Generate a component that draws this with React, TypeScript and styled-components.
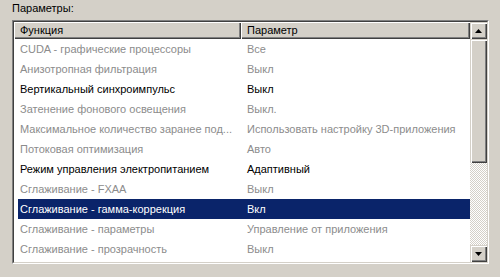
import React from "react";
import styled, { createGlobalStyle } from "styled-components";

const Global = createGlobalStyle`
  html, body { margin: 0; padding: 0; background: #d4d0c8; }
  body { font-family: "Liberation Sans", Arial, sans-serif; font-size: 11px; }
`;

const Page = styled.div`
  width: 500px;
  height: 277px;
  background: #d4d0c8;
  padding: 0 0 0 12px;
  box-sizing: border-box;
`;

const Label = styled.div`
  height: 20px;
  line-height: 16px;
  color: #000;
`;

const Panel = styled.div`
  width: 477px;
  height: 244px;
  box-sizing: border-box;
  border-style: solid;
  border-width: 1px;
  border-color: #808080 #fff #fff #808080;
  display: flex;
`;

const Inner = styled.div`
  flex: 1;
  display: flex;
  border-style: solid;
  border-width: 1px;
  border-color: #404040 #d4d0c8 #d4d0c8 #404040;
  background: #fff;
`;

const List = styled.div`
  flex: 1;
  display: flex;
  flex-direction: column;
  overflow: hidden;
`;

const Header = styled.div`
  display: grid;
  grid-template-columns: 227px 1fr;
  height: 17px;
  flex: none;
`;

const HeadCell = styled.div`
  background: #d4d0c8;
  box-shadow: inset 1px 1px #fff, inset -1px -1px #404040, inset -2px -2px #808080;
  padding-left: 6px;
  line-height: 16px;
  color: #000;
  white-space: nowrap;
`;

const Row = styled.div<{ $sel?: boolean }>`
  display: grid;
  grid-template-columns: 223px 1fr;
  height: 20px;
  line-height: 20px;
  margin-left: 4px;
  background: ${(p) => (p.$sel ? "#0a246a" : "transparent")};
  flex: none;
`;

const Cell = styled.div<{ $tone: "gray" | "black" | "sel"; $pad: number }>`
  padding-left: ${(p) => p.$pad}px;
  white-space: nowrap;
  overflow: hidden;
  color: ${(p) => (p.$tone === "sel" ? "#fff" : p.$tone === "black" ? "#000" : "#8c8c8c")};
`;

const Scroll = styled.div`
  width: 17px;
  flex: none;
  display: flex;
  flex-direction: column;
`;

const raised = `
  background: #d4d0c8;
  box-shadow: inset 1px 1px #d4d0c8, inset 2px 2px #fff, inset -1px -1px #404040, inset -2px -2px #808080;
`;

const Btn = styled.div`
  ${raised}
  height: 17px;
  flex: none;
  display: flex;
  align-items: center;
  justify-content: center;
`;

const Thumb = styled.div`
  ${raised}
  height: 124px;
  flex: none;
`;

const Track = styled.div`
  flex: 1;
  background: repeating-conic-gradient(#d4d0c8 0 25%, #ffffff 0 50%) 0 0 / 2px 2px;
`;

const Arrow = ({ up }: { up?: boolean }) => (
  <svg width="7" height="4" viewBox="0 0 7 4" style={{ transform: up ? "none" : "rotate(180deg)" }}>
    <polygon points="3.5,0 7,4 0,4" fill="#000" />
  </svg>
);

type R = { f: string; v: string; tone: "gray" | "black" | "sel" };

const rows: R[] = [
  { f: "CUDA - графические процессоры", v: "Все", tone: "gray" },
  { f: "Анизотропная фильтрация", v: "Выкл", tone: "gray" },
  { f: "Вертикальный синхроимпульс", v: "Выкл", tone: "black" },
  { f: "Затенение фонового освещения", v: "Выкл.", tone: "gray" },
  { f: "Максимальное количество заранее под...", v: "Использовать настройку 3D-приложения", tone: "gray" },
  { f: "Потоковая оптимизация", v: "Авто", tone: "gray" },
  { f: "Режим управления электропитанием", v: "Адаптивный", tone: "black" },
  { f: "Сглаживание - FXAA", v: "Выкл", tone: "gray" },
  { f: "Сглаживание - гамма-коррекция", v: "Вкл", tone: "sel" },
  { f: "Сглаживание - параметры", v: "Управление от приложения", tone: "gray" },
  { f: "Сглаживание - прозрачность", v: "Выкл", tone: "gray" },
];

export default function App() {
  return (
    <Page>
      <Global />
      <Label>Параметры:</Label>
      <Panel>
        <Inner>
          <List>
            <Header>
              <HeadCell>Функция</HeadCell>
              <HeadCell>Параметр</HeadCell>
            </Header>
            {rows.map((r) => (
              <Row key={r.f} $sel={r.tone === "sel"}>
                <Cell $tone={r.tone} $pad={2}>{r.f}</Cell>
                <Cell $tone={r.tone} $pad={6}>{r.v}</Cell>
              </Row>
            ))}
          </List>
          <Scroll>
            <Btn><Arrow up /></Btn>
            <Thumb />
            <Track />
            <Btn><Arrow /></Btn>
          </Scroll>
        </Inner>
      </Panel>
    </Page>
  );
}
